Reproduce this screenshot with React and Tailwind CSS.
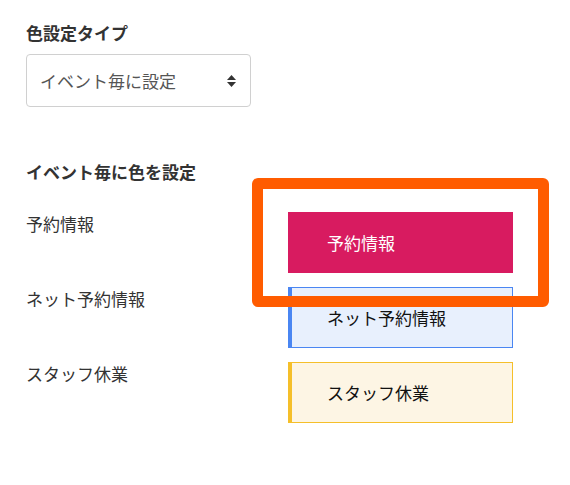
import React from "react";

const rows = [
  { label: "予約情報", box: "bg-[#d81b60] border border-[#d81b60] border-l-4 text-white" },
  { label: "ネット予約情報", box: "bg-[#e8f0fd] border border-[#4a86f2] border-l-4 text-[#111]" },
  { label: "スタッフ休業", box: "bg-[#fdf5e4] border border-[#f5bf2a] border-l-4 text-[#111]" },
];

export default function App() {
  return (
    <div
      className="relative w-[570px] h-[485px] bg-white pl-[26px] pt-[22px] text-[#333]"
      style={{ fontFamily: '"Noto Sans CJK JP", "Noto Sans", sans-serif' }}
    >
      <h2 className="text-[17px] font-bold leading-[22px] text-[#333]">色設定タイプ</h2>
      <div className="mt-[10px] w-[225px] h-[53px] border border-[#d0d0d0] rounded-[4px] flex items-center justify-between pl-[13px] pr-[14px] text-[17px] text-[#555]">
        <span className="leading-[24px]">イベント毎に設定</span>
        <svg width="9" height="12" viewBox="0 0 9 12">
          <polygon points="4.5,0 9,5 0,5" fill="#333" />
          <polygon points="0,7 9,7 4.5,12" fill="#333" />
        </svg>
      </div>
      <h2 className="mt-[54px] text-[17px] font-bold leading-[22px] text-[#333]">イベント毎に色を設定</h2>
      <div className="mt-[29px] flex flex-col gap-[14px]">
        {rows.map((r) => (
          <div key={r.label} className="flex">
            <div className="w-[262px] text-[17px] leading-[24px] text-[#333]">{r.label}</div>
            <div className={`w-[225px] h-[61px] flex items-center pl-[35px] text-[17px] leading-[24px] ${r.box}`}>
              {r.label}
            </div>
          </div>
        ))}
      </div>
      <div className="absolute left-[252px] top-[178px] w-[297px] h-[129px] border-[11px] border-[#ff5c00] rounded-[6px]" />
    </div>
  );
}
